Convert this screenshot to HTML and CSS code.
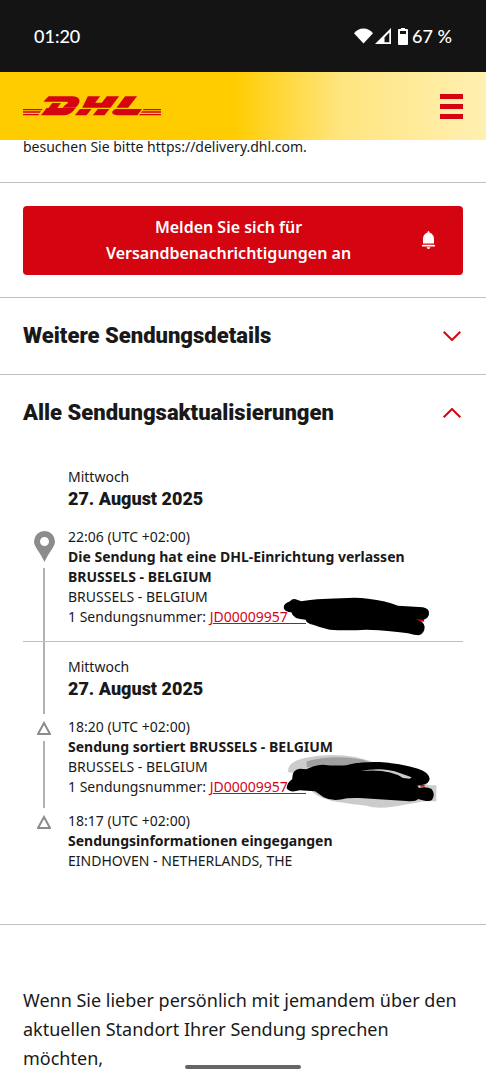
FILE: index.html
```html
<!DOCTYPE html>
<html lang="de">
<head>
<meta charset="utf-8">
<meta name="viewport" content="width=device-width, initial-scale=1">
<title>DHL Sendungsverfolgung</title>
<link rel="stylesheet" href="styles.css">
</head>
<body>
<div class="status-bar">
  <time class="clock">01:20</time>
  <div class="status-icons">
    <svg class="wifi" viewBox="0 0 20 16" aria-hidden="true"><path d="M0 5Q4 0 10 0T20 5L10 16Z"/></svg>
    <svg class="signal" viewBox="0 0 16 16" aria-hidden="true"><path fill-rule="evenodd" d="M16 0V16H0ZM14.300 4.500L9.500 9.500V14.300H14.300Z"/></svg>
    <svg class="battery" viewBox="0 0 10 17" aria-hidden="true"><path fill-rule="evenodd" d="M3 0H7V1H9Q10 1 10 2V16Q10 17 9 17H1Q0 17 0 16V2Q0 1 1 1H3ZM2 3V6H8V3Z"/></svg>
    <span>67 %</span>
  </div>
</div>
<header class="site-header">
  <a class="logo" href="#" aria-label="DHL">
    <svg viewBox="0 0 415 60" aria-hidden="true">
      <path d="M77 1H150Q172 3 170 17Q167 29 158 35H118Q121 33 124 29L134 22Q138 17 132 17H61ZM88 21H114L103 36H158Q144 58 124 58H54L71 36H77ZM195 1H232L217 20H237L252 1H289L263 35H178ZM177 39H206L191 58H156L171 39ZM225 39H260L245 58H210ZM307 1H343L316 35H281ZM278 39H358L344 58H283Q268 56 268 48Q269 43 278 39Z"/>
      <path d="M0 39H59L56 43H0ZM0 46H54L51 50H0ZM0 54H49L46 58H0ZM363 39H415V43H360ZM358 46H415V50H355ZM352 54H415V58H349Z"/>
    </svg>
  </a>
  <button class="menu" type="button" aria-label="Menü"><span></span><span></span><span></span></button>
</header>
<main>
  <p class="notice">besuchen Sie bitte https://delivery.dhl.com.</p>
  <section class="subscribe">
    <button class="cta" type="button">
      <span>Melden Sie sich für Versandbenachrichtigungen an</span>
      <svg viewBox="0 0 13 18" aria-hidden="true"><path d="M5.500 1.500Q5.500 0 6.500 0T7.500 1.500Q12 3 12 8V12H1V8Q1 3 5.500 1.500ZM1 12.600H12V13.200H1ZM0 14H13V15.500H0ZM4.500 16.200H8.500Q8 18 6.500 18T4.500 16.200Z"/></svg>
    </button>
  </section>
  <h2 class="fold"><button type="button" aria-expanded="false">Weitere Sendungsdetails
    <svg viewBox="0 0 18 10" aria-hidden="true"><path d="M.7.700L9 9L17.300.700"/></svg></button></h2>
  <h2 class="fold"><button type="button" aria-expanded="true">Alle Sendungsaktualisierungen
    <svg viewBox="0 0 18 10" aria-hidden="true"><path d="M.7 9.300L9 1L17.300 9.300"/></svg></button></h2>
  <ol class="timeline">
    <li class="row day">
      <div class="rail"></div>
      <div class="body"><p>Mittwoch</p><h3>27. August 2025</h3></div>
    </li>
    <li class="row">
      <div class="rail marked">
        <svg class="pin" viewBox="0 0 21 31" aria-hidden="true"><path fill-rule="evenodd" d="M10.500 0A10.500 10.500 0 0 1 21 10.500C21 16 15 21 10.500 31C6 21 0 16 0 10.500A10.500 10.500 0 0 1 10.500 0ZM10.500 6A4.500 4.500 0 1 0 10.500 15A4.500 4.500 0 1 0 10.500 6Z"/></svg>
        <i class="line"></i>
      </div>
      <div class="body event">
        <p>22:06 (UTC +02:00)</p>
        <p class="strong">Die Sendung hat eine DHL-Einrichtung verlassen BRUSSELS - BELGIUM</p>
        <p>BRUSSELS - BELGIUM</p>
        <p>1 Sendungsnummer: <a href="#">JD00009957&nbsp;&nbsp;&nbsp;&nbsp;&nbsp;</a></p>
        <svg class="scribble" viewBox="0 0 480 150" aria-hidden="true"><path fill="#d40511" d="M390 65h33v18h-33z"/><path d="M3 44Q0 34 10 27L21 22Q29 12 42 17L55 22Q90 15 175 13Q220 9 255 14Q310 20 345 35L420 40Q440 44 438 60Q436 76 418 77L398 75L405 79Q422 83 425 98Q425 118 407 124Q395 124 375 118Q330 110 250 107Q190 110 140 107Q110 100 90 92Q70 88 68 77Q30 77 25 55Q8 54 3 44Z"/></svg>
      </div>
    </li>
    <li class="row day later">
      <div class="rail"><i class="line end"></i></div>
      <div class="body"><p>Mittwoch</p><h3>27. August 2025</h3></div>
    </li>
    <li class="row">
      <div class="rail marked">
        <svg class="step" viewBox="0 0 14 14" aria-hidden="true"><path d="M7 2L13 13H1Z"/></svg>
        <i class="line end"></i>
      </div>
      <div class="body event">
        <p>18:20 (UTC +02:00)</p>
        <p class="strong">Sendung sortiert BRUSSELS - BELGIUM</p>
        <p>BRUSSELS - BELGIUM</p>
        <p>1 Sendungsnummer: <a href="#">JD00009957&nbsp;&nbsp;&nbsp;&nbsp;&nbsp;</a></p>
        <svg class="scribble" viewBox="0 0 480 180" aria-hidden="true"><path fill="#ccc" d="M16 55Q10 25 65 12Q140-5 220 10L260 20L438 94H460V142H425Q380 150 330 158Q280 165 250 155Q200 150 170 145Q110 135 88 113L60 60Z"/><path fill="#a0a0a0" d="M71 22Q150 0 240 17L260 25L150 40L71 40Z"/><path d="M70 46Q90 34 120 32Q150 36 190 34Q230 22 290 24Q350 28 405 44Q438 54 440 75Q437 90 420 92L403 95L408 102Q430 97 446 105Q458 122 447 138Q440 143 425 140L405 135Q398 144 370 141L230 132Q190 131 178 136Q145 142 122 130Q105 118 96 112L50 109Q20 118 11 103Q10 88 28 75Q26 48 50 44Z"/><path fill="#ccc" d="M232 51Q300 38 350 57L386 70L380 74L360 72Q320 43 232 51Z"/><path fill="#d40511" d="M412 93h13v5h-13z"/></svg>
      </div>
    </li>
    <li class="row">
      <div class="rail marked"><svg class="step" viewBox="0 0 14 14" aria-hidden="true"><path d="M7 2L13 13H1Z"/></svg></div>
      <div class="body event">
        <p>18:17 (UTC +02:00)</p>
        <p class="strong">Sendungsinformationen eingegangen</p>
        <p>EINDHOVEN - NETHERLANDS, THE</p>
      </div>
    </li>
  </ol>
  <p class="contact">Wenn Sie lieber persönlich mit jemandem über den aktuellen Standort Ihrer Sendung sprechen möchten,</p>
</main>
<div class="home-bar"></div>
</body>
</html>
```
FILE: styles.css
```css
* { box-sizing: border-box; }
body { margin: 0; background: #fff; color: #191919; font: 14px/20px "Noto Sans", "Open Sans", sans-serif; }
p, h2, h3, ol { margin: 0; padding: 0; }
button { border: 0; cursor: pointer; }
.status-bar { display: flex; justify-content: space-between; align-items: center; height: 72px; padding: 0 34px; background: #141414; color: #fff; font: 500 18px/24px Lato, sans-serif; }
.status-icons { display: flex; align-items: center; gap: 2px; }
.status-icons svg, .cta svg { fill: #fff; }
.wifi { width: 19px; height: 16px; }
.signal { width: 16px; height: 16px; }
.battery { width: 10px; height: 17px; margin: 0 2px 0 5px; }
.site-header { display: flex; justify-content: space-between; align-items: center; height: 68px; padding: 0 23px; background: linear-gradient(90deg, #fc0 0%, #fc0 48%, #ffe57f 70%, #fff0b2 100%); }
.logo svg { display: block; width: 138px; height: 20px; fill: #d40511; }
.menu { display: flex; flex-direction: column; gap: 5px; padding: 0; background: none; }
.menu span { width: 23px; height: 5px; background: #d40511; }
.notice { padding: 0 23px 28px; line-height: 14px; }
.subscribe { padding: 23px 23px 22px; border-top: 1px solid #bfbfbf; }
.cta { display: flex; align-items: center; width: 100%; padding: 8px 28px 9px; border-radius: 4px; background: #d40511; color: #fff; font: 600 16px/26px "Noto Sans", sans-serif; }
.cta span { flex: 1; padding: 0 40px 0 24px; }
.cta svg { width: 13px; height: 18px; }
.fold { border-top: 1px solid #bfbfbf; }
.fold button { display: flex; justify-content: space-between; align-items: center; width: 100%; padding: 22px 25px 22px 23px; background: none; color: #191919; font: 900 22px/32px Roboto, sans-serif; }
.fold svg { width: 18px; height: 10px; fill: none; stroke: #d40511; stroke-width: 2; }
.timeline { padding: 16px 23px 39px; list-style: none; border-bottom: 1px solid #bfbfbf; }
.row { display: grid; grid-template-columns: 45px 1fr; }
.rail { display: flex; flex-direction: column; align-items: center; width: 42px; gap: 6px; }
.marked { padding-top: 4px; }
.line { flex: 1; width: 2px; background: #b2b2b2; }
.end { margin-bottom: 3px; }
.day .body { padding-bottom: 16px; }
.later { border-top: 1px solid #bfbfbf; }
.later .body { padding-top: 15px; }
.body h3 { font: 900 18px/24px Roboto, sans-serif; }
.event { position: relative; padding-bottom: 14px; }
.strong { font-weight: 700; }
.event a { color: #d40511; }
.pin { width: 21px; height: 31px; fill: #8c8c8c; }
.step { width: 14px; height: 14px; fill: none; stroke: #8c8c8c; stroke-width: 2; }
.scribble { position: absolute; left: 215px; bottom: -3px; width: 160px; }
.contact { padding: 61px 23px 6px; font-size: 18px; line-height: 29px; }
.home-bar { position: fixed; bottom: 11px; left: 38%; width: 24%; height: 4px; border-radius: 2px; background: #666; }
```
